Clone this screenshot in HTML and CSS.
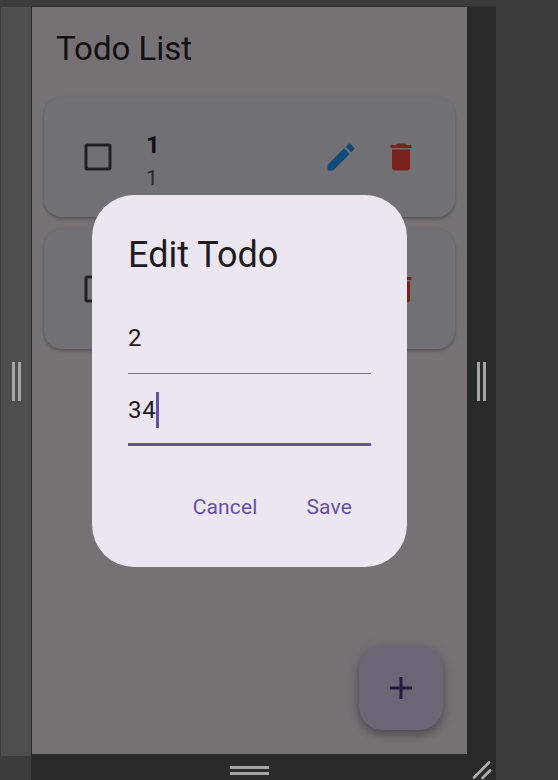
FILE: index.html
```html
<!DOCTYPE html>
<html lang="en">
<head>
<meta charset="utf-8">
<title>Todo List</title>
<link rel="stylesheet" href="styles.css">
</head>
<body>
<svg class="defs" aria-hidden="true">
  <symbol id="edit" viewBox="0 0 24 24"><path d="M3 17.25V21h3.75L17.81 9.94l-3.75-3.75L3 17.25zM20.71 7.04a1 1 0 0 0 0-1.41l-2.34-2.34a1 1 0 0 0-1.41 0l-1.83 1.83 3.75 3.75 1.83-1.83z"/></symbol>
  <symbol id="delete" viewBox="0 0 24 24"><path d="M6 19c0 1.100.9 2 2 2h8c1.100 0 2-.9 2-2V7H6v12zM19 4h-3.500l-1-1h-5l-1 1H5v2h14V4z"/></symbol>
  <symbol id="box" viewBox="0 0 24 24"><path d="M19 5v14H5V5h14m0-2H5a2 2 0 0 0-2 2v14a2 2 0 0 0 2 2h14a2 2 0 0 0 2-2V5a2 2 0 0 0-2-2z"/></symbol>
</svg>
<div class="workspace">
  <div class="rail"><span class="grip"></span></div>
  <div class="device">
    <main class="screen">
      <h1 class="title">Todo List</h1>
      <div class="card">
        <svg class="check"><use href="#box"/></svg>
        <div class="text"><div class="name">1</div><div class="note">1</div></div>
        <svg class="icon edit"><use href="#edit"/></svg>
        <svg class="icon delete"><use href="#delete"/></svg>
      </div>
      <div class="card">
        <svg class="check"><use href="#box"/></svg>
        <div class="text"></div>
        <svg class="icon edit"><use href="#edit"/></svg>
        <svg class="icon delete"><use href="#delete"/></svg>
      </div>
      <div class="fab"><svg class="plus" viewBox="0 0 22 22"><path d="M11 0v22M0 11h22"/></svg></div>
      <section class="dialog">
        <h2 class="heading">Edit Todo</h2>
        <div class="field">2</div>
        <div class="field focused">34<span class="caret"></span></div>
        <div class="actions"><span>Cancel</span><span>Save</span></div>
      </section>
    </main>
    <div class="side"><span class="grip"></span></div>
    <div class="bottom"><span class="grip flat"></span></div>
    <div class="corner"><svg class="resize" viewBox="0 0 20 20"><path d="M2 17.500L17 2.500M10.500 18L18 10.500"/></svg></div>
  </div>
</div>
</body>
</html>
```
FILE: styles.css
```css
* { box-sizing: border-box; }
body {
  margin: 0;
  background: #3c3c3c;
  font-family: Roboto, "Liberation Sans", sans-serif;
  color: #1d1b20;
}
.defs { display: none; }
.workspace {
  display: flex;
  height: 780px;
  padding: 7px 0 0 1px;
  overflow: hidden;
}
.rail {
  display: flex;
  align-items: center;
  justify-content: center;
  width: 30px;
  height: 749px;
  background: #4e4e4e;
}
.device {
  display: grid;
  grid-template-columns: 435px 29px;
  grid-template-rows: 747px 26px;
  padding-left: 1px;
  background: #282a2b;
  box-shadow: 0 -1px 0 #303030;
}
.grip {
  width: 9px;
  height: 39px;
  border: solid #a5a5a5;
  border-width: 0 3px;
}
.grip.flat {
  width: 39px;
  height: 9px;
  border-width: 3px 0;
}
.side, .bottom, .corner {
  display: flex;
  align-items: center;
  justify-content: center;
}
.side { padding-top: 2px; }
.bottom { padding-top: 7px; }
.corner { padding-top: 5px; }
.resize {
  width: 20px;
  height: 20px;
  fill: none;
  stroke: #adafae;
  stroke-width: 2.600;
  stroke-linecap: round;
}
.screen {
  position: relative;
  padding: 21px 12px 0;
  background: #767174;
  overflow: hidden;
}
.title {
  margin: 0 0 28px 12px;
  padding-top: 1px;
  font-size: 33px;
  line-height: 40px;
  font-weight: 400;
  color: #111113;
}
.card {
  display: flex;
  align-items: center;
  height: 120px;
  margin-bottom: 12px;
  padding: 0 36px;
  border-radius: 18px;
  background: #717075;
  box-shadow: 0 2px 3px rgba(0, 0, 0, .2), 0 1px 4px rgba(0, 0, 0, .08);
}
.check {
  width: 36px;
  height: 36px;
  fill: #222024;
}
.text {
  flex: 1;
  padding: 6px 0 0 30px;
}
.name {
  font-size: 24px;
  line-height: 36px;
  font-weight: 700;
  color: #0e0d10;
}
.note {
  font-size: 21px;
  line-height: 30px;
  color: #29272c;
}
.icon { width: 36px; height: 36px; }
.edit { margin-right: 24px; fill: #104b7a; }
.delete { fill: #7a211b; }
.fab {
  position: absolute;
  right: 24px;
  bottom: 24px;
  display: flex;
  align-items: center;
  justify-content: center;
  width: 84px;
  height: 84px;
  border-radius: 24px;
  background: #6c6576;
  box-shadow: 0 5px 9px rgba(0, 0, 0, .25), 0 1px 14px rgba(0, 0, 0, .13);
}
.plus {
  width: 22px;
  height: 22px;
  fill: none;
  stroke: #24183f;
  stroke-width: 3;
}
.dialog {
  position: absolute;
  left: 60px;
  top: 187.500px;
  width: 315px;
  height: 372px;
  padding: 36px;
  border-radius: 42px;
  background: #ece6f0;
  transform: translateZ(0);
}
.heading {
  margin: 0 0 23.500px;
  font-size: 36px;
  line-height: 48px;
  font-weight: 400;
}
.field {
  display: flex;
  align-items: center;
  height: 72px;
  border-bottom: 1.500px solid #79747e;
  font-size: 24px;
  letter-spacing: .75px;
}
.field.focused {
  padding-top: 3px;
  border-bottom: 3px solid #6750a4;
}
.caret {
  width: 3px;
  height: 36px;
  background: #6750a4;
}
.actions {
  display: flex;
  justify-content: flex-end;
  gap: 49px;
  padding: 45.500px 19px 0 0;
  font-size: 21px;
  line-height: 30px;
  letter-spacing: .15px;
  color: #6750a4;
}
```
